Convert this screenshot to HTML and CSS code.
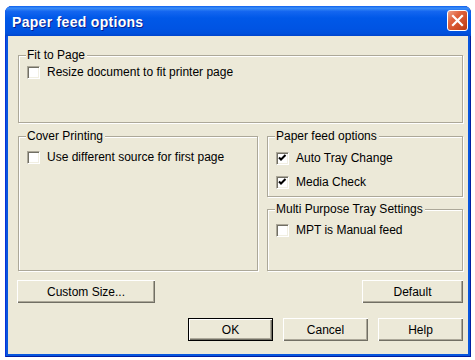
FILE: index.html
```html
<!DOCTYPE html>
<html lang="en">
<head>
  <meta charset="UTF-8">
  <title>Paper feed options</title>
  <link rel="stylesheet" href="styles.css">
</head>
<body>
  <div class="window">
    <div class="titlebar">
      <span class="title">Paper feed options</span>
      <button class="close" aria-label="Close">
        <svg width="13" height="13" viewBox="0 0 13 13">
          <path d="M2 2 L11 11 M11 2 L2 11" stroke="#fff" stroke-width="2.2" stroke-linecap="square"/>
        </svg>
      </button>
    </div>
    <div class="client">
      <div class="group group-fit">
        <span class="group-title">Fit to Page</span>
        <label class="check"><span class="box"></span>Resize document to fit printer page</label>
      </div>

      <div class="middle">
        <div class="group group-cover">
          <span class="group-title">Cover Printing</span>
          <label class="check"><span class="box"></span>Use different source for first page</label>
        </div>
        <div class="side">
          <div class="group group-feed">
            <span class="group-title">Paper feed options</span>
            <label class="check"><span class="box checked"></span>Auto Tray Change</label>
            <label class="check"><span class="box checked"></span>Media Check</label>
          </div>
          <div class="group group-mpt">
            <span class="group-title">Multi Purpose Tray Settings</span>
            <label class="check"><span class="box"></span>MPT is Manual feed</label>
          </div>
        </div>
      </div>

      <div class="row-extra">
        <button class="btn btn-custom">Custom Size...</button>
        <button class="btn btn-default">Default</button>
      </div>

      <div class="row-main">
        <button class="btn btn-ok">OK</button>
        <button class="btn">Cancel</button>
        <button class="btn">Help</button>
      </div>
    </div>
  </div>
</body>
</html>
```

FILE: styles.css
```css
body {
  margin: 0;
  background: #ffffff;
  font-family: "Liberation Sans", Arial, sans-serif;
  font-size: 12px;
  color: #000;
}
.window {
  margin: 6px 0 0 5px;
  width: 466px;
  height: 351px;
  box-sizing: border-box;
  padding: 0 3px 3px 3px;
  background: #0855dd;
  border-radius: 7px 7px 0 0;
  box-shadow: inset 1px 0 #0831d9, inset -1px 0 #001ea0, inset 0 -1px #001ea0;
  display: flex;
  flex-direction: column;
}
.titlebar {
  height: 30px;
  margin: 0 -3px;
  padding: 0 3px 0 7px;
  display: flex;
  align-items: center;
  justify-content: space-between;
  border-radius: 7px 7px 0 0;
  background: linear-gradient(to bottom, #0a5ff0 0%, #3d8ff6 7%, #1466f0 18%, #0058e8 40%, #0054e3 75%, #0050dc 92%, #0044cc 100%);
}
.title {
  color: #fff;
  font-weight: bold;
  font-size: 14px;
  letter-spacing: 0.3px;
  text-shadow: 1px 1px #0a1e8c;
  padding-top: 1px;
}
.close {
  width: 21px;
  height: 21px;
  margin-top: -1px;
  padding: 0;
  border: 1px solid #fff;
  border-radius: 3px;
  background: linear-gradient(to bottom right, #f0a38a 0%, #e0633e 35%, #cc4a22 75%, #b83a14 100%);
  display: flex;
  align-items: center;
  justify-content: center;
}
.client {
  flex: 1;
  background: #ece9d8;
  padding: 19px 5px 0 10px;
  display: flex;
  flex-direction: column;
}
.group {
  position: relative;
  box-sizing: border-box;
  border: 1px solid #aca899;
  box-shadow: inset 1px 1px #fff, 1px 1px #fff;
  display: flex;
  flex-direction: column;
  align-items: flex-start;
  padding: 14px 0 0 8px;
  gap: 10px;
}
.group-title {
  position: absolute;
  top: -7px;
  left: 7px;
  padding: 0 2px 0 1px;
  line-height: 13px;
  background: #ece9d8;
}
.group-fit {
  height: 68px;
  padding-top: 10px;
}
.middle {
  margin-top: 13px;
  display: flex;
  gap: 9px;
  height: 135px;
}
.group-cover {
  width: 240px;
}
.side {
  flex: 1;
  display: flex;
  flex-direction: column;
  gap: 12px;
}
.group-feed {
  height: 61px;
  padding-top: 15px;
  gap: 11px;
}
.group-mpt {
  flex: 1;
}
.check {
  display: flex;
  align-items: center;
  gap: 7px;
  height: 13px;
  line-height: 13px;
}
.box {
  width: 13px;
  height: 13px;
  box-sizing: border-box;
  background: #fff;
  border-top: 1px solid #aca899;
  border-left: 1px solid #aca899;
  border-right: 1px solid #fff;
  border-bottom: 1px solid #fff;
  box-shadow: inset 1px 1px #716f64, inset -1px -1px #f1efe2;
}
.box.checked {
  background: #fff url("data:image/svg+xml;utf8,<svg xmlns='http://www.w3.org/2000/svg' width='11' height='11'><path d='M2 4.5 L4 6.5 L8.5 2' stroke='black' stroke-width='2' fill='none'/></svg>") no-repeat 0 0;
}
.row-extra {
  margin-top: 9px;
  display: flex;
  justify-content: space-between;
}
.row-main {
  margin-top: 15px;
  display: flex;
  justify-content: flex-end;
  gap: 10px;
}
.btn {
  width: 85px;
  height: 23px;
  padding: 0;
  font-family: inherit;
  font-size: 12px;
  color: #000;
  background: #ece9d8;
  border: none;
  box-shadow: inset 1px 1px #fff, inset -1px -1px #716f64, inset -2px -2px #aca899;
}
.btn-custom {
  width: 138px;
  margin-left: -1px;
}
.btn-default {
  width: 101px;
}
.btn-ok {
  box-shadow: inset 0 0 0 1px #000, inset 2px 2px #fff, inset -2px -2px #716f64, inset -3px -3px #aca899;
}
```
